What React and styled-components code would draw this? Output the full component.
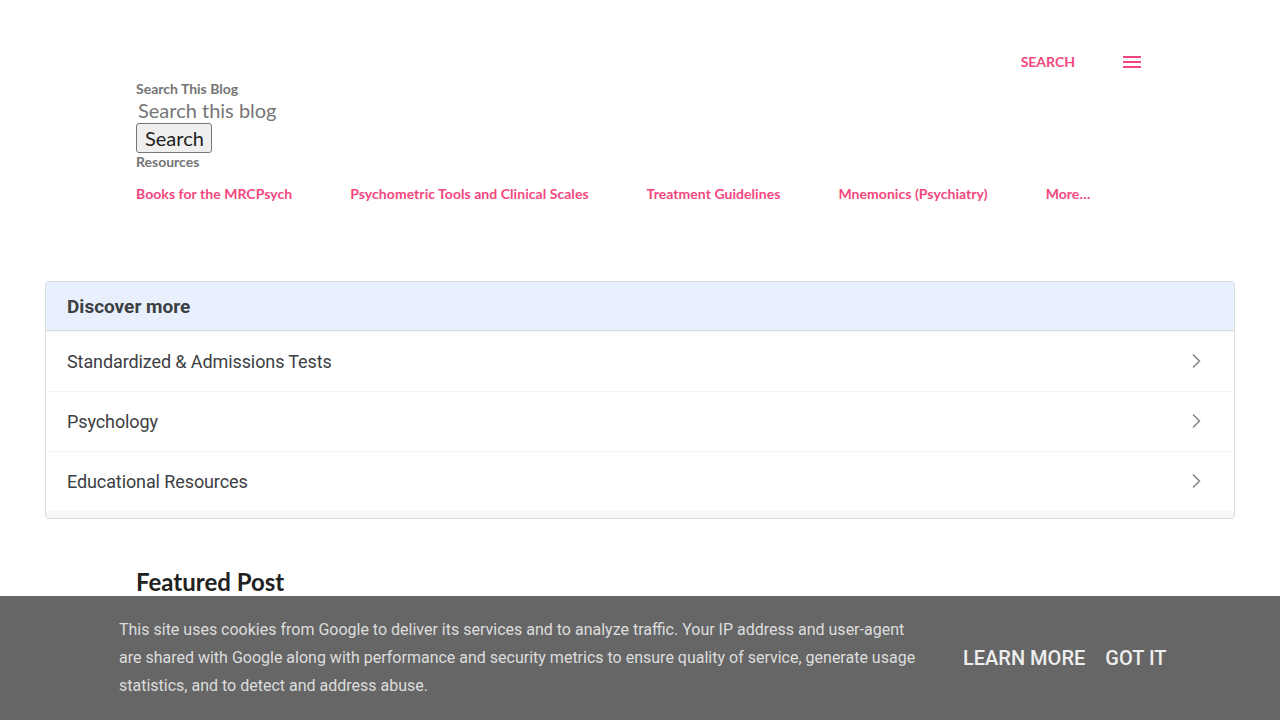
import styled, { createGlobalStyle } from "styled-components";

const LINKS = [
  "Books for the MRCPsych",
  "Psychometric Tools and Clinical Scales",
  "Treatment Guidelines",
  "Mnemonics (Psychiatry)",
  "More…",
];

const TOPICS = [
  "Standardized & Admissions Tests",
  "Psychology",
  "Educational Resources",
];

function Chevron() {
  return (
    <svg width="24" height="24" viewBox="0 0 24 24" fill="none">
      <path d="M9 4.5l6.5 6.5-6.5 6.5" stroke="#80868b" strokeWidth="1.5" />
    </svg>
  );
}

function Burger() {
  return (
    <svg width="18" height="12" viewBox="0 0 18 12">
      <rect y="0" width="18" height="2" fill="#f4477e" />
      <rect y="5" width="18" height="2" fill="#f4477e" />
      <rect y="10" width="18" height="2" fill="#f4477e" />
    </svg>
  );
}

export default function App() {
  return (
    <>
      <GlobalStyle />
      <Page>
        <TopBar>
          <SearchLink>SEARCH</SearchLink>
          <MenuButton>
            <Burger />
          </MenuButton>
        </TopBar>
        <Widgets>
          <WidgetTitle>Search This Blog</WidgetTitle>
          <SearchInput placeholder="Search this blog" />
          <SearchButton>Search</SearchButton>
          <WidgetTitle>Resources</WidgetTitle>
          <LinkRow>
            {LINKS.map((l) => (
              <PinkLink key={l}>{l}</PinkLink>
            ))}
          </LinkRow>
        </Widgets>
        <Discover>
          <DiscoverHead>Discover more</DiscoverHead>
          {TOPICS.map((t) => (
            <TopicRow key={t}>
              <span>{t}</span>
              <Chevron />
            </TopicRow>
          ))}
          <DiscoverFoot />
        </Discover>
        <Featured>Featured Post</Featured>
      </Page>
      <CookieBar>
        <CookieText>
          This site uses cookies from Google to deliver its services and to analyze traffic. Your IP address and user-agent
          are shared with Google along with performance and security metrics to ensure quality of service, generate usage
          statistics, and to detect and address abuse.
        </CookieText>
        <CookieActions>
          <CookieButton>LEARN MORE</CookieButton>
          <CookieButton>GOT IT</CookieButton>
        </CookieActions>
      </CookieBar>
    </>
  );
}

const GlobalStyle = createGlobalStyle`
  html, body {
    margin: 0;
    padding: 0;
    background: #fff;
    font-family: Lato, "Liberation Sans", sans-serif;
    overflow: hidden;
  }
`;

const Page = styled.div`
  width: 1280px;
  height: 720px;
`;

const TopBar = styled.div`
  display: flex;
  justify-content: flex-end;
  align-items: center;
  gap: 48px;
  height: 24px;
  padding: 50px 139px 0 0;
`;

const SearchLink = styled.span`
  font-size: 14px;
  font-weight: 700;
  color: #f4477e;
  margin-top: -2px;
`;

const MenuButton = styled.span`
  display: flex;
  align-items: center;
`;

const Widgets = styled.div`
  display: flex;
  flex-direction: column;
  align-items: flex-start;
  padding: 6px 0 0 136px;
`;

const WidgetTitle = styled.div`
  font-size: 14px;
  font-weight: 700;
  color: #757575;
  line-height: 18px;
`;

const SearchInput = styled.input`
  border: none;
  outline: none;
  padding: 0 2px;
  margin: 0;
  height: 24px;
  font-family: Lato, sans-serif;
  font-size: 20px;
  color: #212121;
  &::placeholder {
    color: #757575;
  }
`;

const SearchButton = styled.button`
  font-family: Lato, sans-serif;
  font-size: 20px;
  color: #212121;
  background: #efefef;
  border: 1px solid #767676;
  border-radius: 3px;
  padding: 0 7px 0 8px;
  height: 30px;
  line-height: 26px;
  margin-top: 1px;
`;

const LinkRow = styled.div`
  display: flex;
  gap: 58px;
  padding-top: 14px;
`;

const PinkLink = styled.span`
  font-size: 14px;
  font-weight: 700;
  color: #f4477e;
  line-height: 18px;
  letter-spacing: 0.05px;
  white-space: nowrap;
`;

const Discover = styled.div`
  margin: 78px 45px 0;
  border: 1px solid #dadce0;
  border-radius: 3px;
  overflow: hidden;
  font-family: Roboto, "Open Sans", sans-serif;
`;

const DiscoverHead = styled.div`
  height: 48px;
  display: flex;
  align-items: center;
  padding-left: 21px;
  background: #e8f0fe;
  border-bottom: 1px solid #dadce0;
  font-size: 19px;
  font-weight: 700;
  color: #3c4043;
`;

const TopicRow = styled.div`
  height: 59px;
  display: flex;
  align-items: center;
  justify-content: space-between;
  padding: 0 26px 0 21px;
  border-top: 1px solid #f4f5f6;
  font-size: 18px;
  letter-spacing: -0.1px;
  color: #3c4043;
  &:first-of-type {
    border-top: none;
  }
`;

const DiscoverFoot = styled.div`
  height: 7px;
  background: #f5f6f8;
`;

const Featured = styled.h3`
  margin: 48px 0 0 136px;
  font-size: 24px;
  font-weight: 700;
  color: #212121;
`;

const CookieBar = styled.div`
  position: fixed;
  left: 0;
  right: 0;
  bottom: 0;
  height: 124px;
  background: #666;
  display: flex;
  align-items: center;
  padding: 0 0 0 119px;
  gap: 44px;
  font-family: Roboto, sans-serif;
`;

const CookieText = styled.p`
  margin: 0;
  width: 800px;
  flex-shrink: 0;
  font-size: 16px;
  line-height: 28px;
  color: #ddd;
`;

const CookieActions = styled.div`
  display: flex;
  gap: 20px;
`;

const CookieButton = styled.span`
  font-size: 20px;
  font-weight: 500;
  color: #eee;
  white-space: nowrap;
`;
